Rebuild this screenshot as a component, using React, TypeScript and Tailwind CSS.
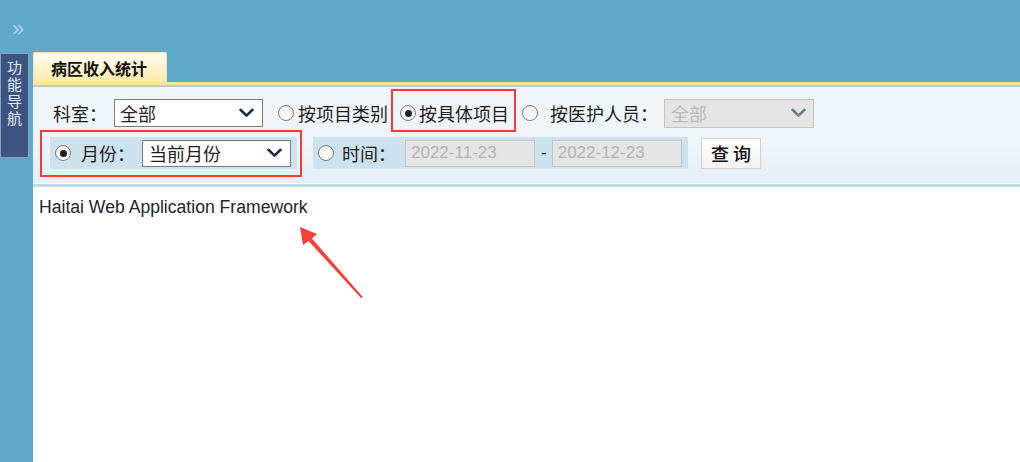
import React from "react";

function Radio({ checked }: { checked?: boolean }) {
  return (
    <span className="inline-flex w-[16px] h-[16px] shrink-0 items-center justify-center rounded-full border border-[#7a7a7a] bg-linear-to-b from-[#ececec] to-[#ffffff]">
      {checked && <span className="block w-[7px] h-[7px] rounded-full bg-[#1e1e1e]" />}
    </span>
  );
}

function Chevron({ color }: { color: string }) {
  return (
    <svg width="15" height="10" viewBox="0 0 15 10" className="shrink-0">
      <path d="M1.5 1.8 L7.5 7.6 L13.5 1.8" stroke={color} strokeWidth="2.6" fill="none" strokeLinecap="round" strokeLinejoin="round" />
    </svg>
  );
}

export default function App() {
  return (
    <div className="relative w-[1020px] h-[462px] overflow-hidden bg-[#5ea8ca] flex font-['Liberation_Sans','Noto_Sans_CJK_SC',sans-serif] text-[#1e1e1e]">
      {/* sidebar */}
      <div className="w-[33px] shrink-0 flex flex-col">
        <div className="h-[53px] pt-[18px] pl-[12px] text-[#a9d3e8] text-[22px] leading-[22px]">»</div>
        <div className="w-[29px] h-[105px] bg-[#3d5482] border border-[#8aa2c2] rounded-r-[2px] flex justify-center pt-[6px]">
          <span className="[writing-mode:vertical-rl] text-[15px] leading-[15px] tracking-[2px] text-[#e3eaf3] font-['Noto_Sans_CJK_SC',sans-serif]">
            功能导航
          </span>
        </div>
      </div>

      {/* main */}
      <div className="flex-1 flex flex-col">
        <div className="h-[52px] shrink-0" />
        <div className="h-[30px] shrink-0 flex">
          <div className="w-[134px] h-[30px] bg-linear-to-b from-[#fffdf2] to-[#ffe9a8] border-t border-l border-r border-[#efe2b8] rounded-t-[2px] flex items-center pl-[17px] text-[16px] font-bold text-[#111] font-['Noto_Sans_CJK_SC',sans-serif]">
            病区收入统计
          </div>
        </div>
        <div className="h-[3px] shrink-0 bg-[#ffe59b]" />
        <div className="h-[2px] shrink-0 bg-[#c3c8cc]" />

        {/* form panel */}
        <div className="h-[96px] shrink-0 bg-linear-to-b from-[#eff4f9] via-[#eff4f9] to-[#e5eff6] pt-[12px] text-[18px] font-['Noto_Sans_CJK_SC',sans-serif]">
          {/* row 1 */}
          <div className="h-[28px] flex items-center">
            <span className="ml-[20px] leading-[28px]">科室：</span>
            <div className="ml-[7px] w-[149px] h-[28px] bg-white border border-[#7b7b7b] flex items-center justify-between pl-[5px] pr-[8px]">
              <span className="leading-[24px]">全部</span>
              <Chevron color="#1b2b4e" />
            </div>
            <span className="ml-[15px]"><Radio /></span>
            <span className="ml-[4px] leading-[28px]">按项目类别</span>
            <span className="relative ml-[12px] flex items-center">
              <Radio checked />
              <span className="ml-[3px] leading-[28px]">按具体项目</span>
              <span className="absolute left-[-9px] right-[-7px] top-[-10px] bottom-[-5px] border-2 border-[#f23a3a]" />
            </span>
            <span className="ml-[13px]"><Radio /></span>
            <span className="ml-[12px] leading-[28px]">按医护人员：</span>
            <div className="ml-[6px] w-[150px] h-[29px] bg-[#e4e4e4] border border-[#c2c2c2] flex items-center justify-between pl-[6px] pr-[7px]">
              <span className="leading-[24px] text-[#b9b9b9]">全部</span>
              <Chevron color="#6d7a88" />
            </div>
          </div>

          {/* row 2 */}
          <div className="mt-[10px] h-[32px] flex items-center">
            <div className="relative ml-[17px] w-[247px] h-[32px] bg-[#cce2ee] flex items-center pl-[5px]">
              <Radio checked />
              <span className="ml-[10px] leading-[28px]">月份：</span>
              <div className="ml-[7px] w-[149px] h-[27px] bg-white border border-[#7b7b7b] flex items-center justify-between pl-[6px] pr-[8px]">
                <span className="leading-[24px]">当前月份</span>
                <Chevron color="#1b2b4e" />
              </div>
              <span className="absolute left-[-10px] right-[-5px] top-[-7px] bottom-[-8px] border-2 border-[#f23a3a]" />
            </div>
            <div className="ml-[16px] w-[375px] h-[32px] bg-[#cce2ee] flex items-center pl-[5px]">
              <Radio />
              <span className="ml-[8px] leading-[28px]">时间：</span>
              <div className="ml-[9px] w-[130px] h-[27px] bg-[#e4e4e4] border border-[#c4c4c4] flex items-center pl-[5px] text-[17px] text-[#b3b3b3] font-['Liberation_Sans',sans-serif]">
                2022-11-23
              </div>
              <span className="ml-[6px] text-[17px] font-['Liberation_Sans',sans-serif]">-</span>
              <div className="ml-[5px] w-[130px] h-[27px] bg-[#e4e4e4] border border-[#c4c4c4] flex items-center pl-[5px] text-[17px] text-[#b3b3b3] font-['Liberation_Sans',sans-serif]">
                2022-12-23
              </div>
            </div>
            <div className="ml-[13px] w-[60px] h-[31px] bg-linear-to-b from-[#ffffff] to-[#f1f1f1] border border-[#cfcfcf] flex items-center justify-center font-medium leading-[28px] text-[#111]">
              查&nbsp;询
            </div>
          </div>
        </div>
        <div className="h-[1px] shrink-0 bg-[#f7fbfd]" />
        <div className="h-[3px] shrink-0 bg-[#c2d9e6]" />

        {/* content */}
        <div className="flex-1 bg-white pt-[10px] pl-[6px]">
          <div className="text-[17.6px] leading-[20px] text-[#24242e] font-['Liberation_Sans',sans-serif]">
            Haitai Web Application Framework
          </div>
        </div>
      </div>

      <svg className="absolute left-0 top-0 pointer-events-none" width="1020" height="462" viewBox="0 0 1020 462">
        <polygon
          points="300,227 317,234 312,238.5 362.8,297 361.2,298.2 308.5,241 303,245"
          fill="#f2403a"
        />
      </svg>
    </div>
  );
}
